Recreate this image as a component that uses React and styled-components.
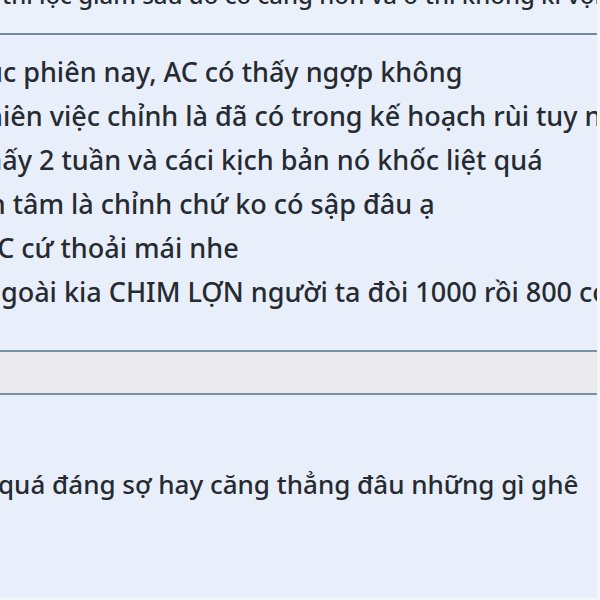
import React from "react";
import styled, { createGlobalStyle } from "styled-components";

const Global = createGlobalStyle`
  html, body {
    margin: 0;
    padding: 0;
    background: #e8effa;
  }
  body {
    font-family: "Noto Sans", "Open Sans", sans-serif;
    color: #262a31;
  }
`;

const lines = [
  { text: "ục phiên nay, AC có thấy ngợp không", shift: -14 },
  { text: "hiên việc chỉnh là đã có trong kế hoạch rùi tuy nhiên", shift: -14 },
  { text: "thấy 2 tuần và cáci kịch bản nó khốc liệt quá", shift: -25 },
  { text: "yên tâm là chỉnh chứ ko có sập đâu ạ", shift: -41 },
  { text: "AC cứ thoải mái nhe", shift: -20 },
  { text: "ngoài kia CHIM LỢN người ta đòi 1000 rồi 800 cơ mà", shift: -16 },
];

const App = () => {
  return (
    <>
      <Global />
      <Page>
        <TopPost>
          <TopLine>thì lọc giảm sâu đó có căng hơn và ở thì không kì vọng</TopLine>
        </TopPost>
        <Message>
          {lines.map((line, index) => (
            <Line key={index} shift={line.shift}>
              {line.text}
            </Line>
          ))}
        </Message>
        <Gap />
        <Reply>
          <Line shift={-2} small>
            quá đáng sợ hay căng thẳng đâu những gì ghê
          </Line>
        </Reply>
      </Page>
    </>
  );
};

const Page = styled.div`
  width: 600px;
  height: 600px;
  overflow: hidden;
  display: flex;
  flex-direction: column;
  background: #e8effa;
  box-sizing: border-box;
  border-right: 3px solid #f3f6fc;
`;

const TopPost = styled.div`
  height: 33px;
  overflow: hidden;
  border-bottom: 2px solid #74879c;
  background: #ebf1fb;
`;

const Message = styled.div`
  padding-top: 15px;
  height: 300px;
  overflow: hidden;
`;

const Line = styled.div`
  font-size: ${(p) => (p.small ? 26 : 27)}px;
  font-weight: 500;
  line-height: 44px;
  white-space: nowrap;
  margin-left: ${(p) => p.shift}px;
`;

const TopLine = styled.div`
  font-size: 24px;
  font-weight: 500;
  line-height: 44px;
  white-space: nowrap;
  margin: -27px 0 0 2px;
`;

const Gap = styled.div`
  height: 41px;
  flex-shrink: 0;
  background: #ebebee;
  border-top: 2px solid #7a90a8;
  border-bottom: 2px solid #7a90a8;
`;

const Reply = styled.div`
  flex: 1;
  padding-top: 67px;
  border-bottom: 2px solid #f3f6fc;
`;

export default App;
